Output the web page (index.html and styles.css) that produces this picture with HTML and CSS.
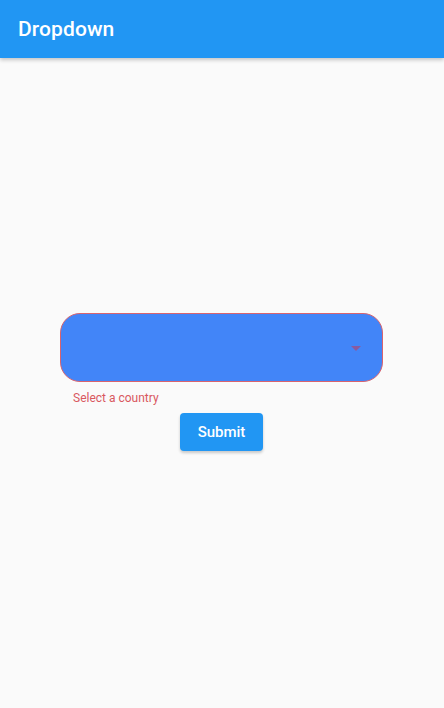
FILE: index.html
```html
<!DOCTYPE html>
<html>
<head>
<meta charset="utf-8">
<link rel="stylesheet" href="styles.css">
</head>
<body>
<header class="appbar"><h1 class="title">Dropdown</h1></header>
<main class="content">
  <form class="form">
    <div class="field">
      <div class="select">
        <svg class="arrow" width="10" height="5" viewBox="0 0 10 5"><path d="M0 0 L10 0 L5 5 Z" fill="#8a5a9e"/></svg>
      </div>
      <div class="error">Select a country</div>
    </div>
    <button type="button" class="submit">Submit</button>
  </form>
</main>
</body>
</html>
```
FILE: styles.css
```css
html, body {
  margin: 0;
  padding: 0;
  height: 100%;
}
body {
  background: #fafafa;
  font-family: Roboto, "Noto Sans", sans-serif;
  display: flex;
  flex-direction: column;
}
.appbar {
  height: 58px;
  background: #2196f3;
  display: flex;
  align-items: center;
  padding: 0 18px;
  box-shadow: 0 2px 4px rgba(0,0,0,0.22);
  position: relative;
  z-index: 1;
}
.title {
  margin: 0;
  color: #fff;
  font-size: 21px;
  font-weight: 500;
  letter-spacing: 0.1px;
}
.content {
  flex: 1;
  display: flex;
  align-items: center;
  justify-content: center;
}
.form {
  width: 323px;
  display: flex;
  flex-direction: column;
  align-items: center;
  margin-top: -2px;
  margin-left: -1px;
}
.field {
  width: 100%;
}
.select {
  box-sizing: border-box;
  height: 69px;
  background: #4285f8;
  border: 1.3px solid #d8636f;
  border-radius: 20px;
  display: flex;
  align-items: center;
  justify-content: flex-end;
  padding-right: 21px;
  padding-top: 1px;
}
.arrow {
  display: block;
}
.error {
  color: #d9585f;
  font-size: 12px;
  padding: 9px 0 0 13px;
  line-height: 14px;
}
.submit {
  margin-top: 8px;
  width: 83px;
  height: 38px;
  border: none;
  border-radius: 4px;
  background: #2196f3;
  color: #fff;
  font-family: Roboto, sans-serif;
  font-size: 15px;
  font-weight: 500;
  box-shadow: 0 2px 3px rgba(0,0,0,0.2);
}
```
